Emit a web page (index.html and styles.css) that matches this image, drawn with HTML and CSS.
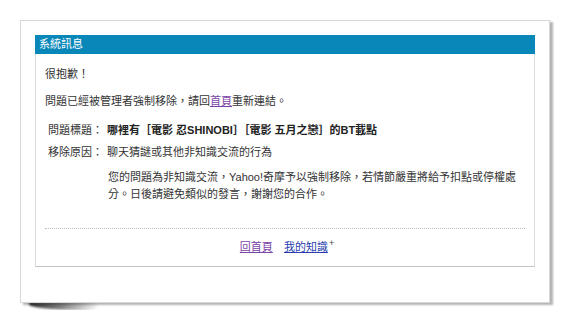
FILE: index.html
```html
<!DOCTYPE html>
<html>
<head>
    <meta charset="utf-8">
    <link rel="stylesheet" href="styles.css">
</head>
<body>

    <div class="page">
        <div class="card">

            <!-- 系統訊息 -->
            <div class="panel">
                <div class="panel-title">系統訊息</div>
                <div class="panel-body">
                    <p class="line">很抱歉！</p>
                    <p class="line notice">問題已經被管理者強制移除，請回<a href="#" class="visited">首頁</a>重新連結。</p>
                    <div class="info">
                        <span class="label">問題標題：</span>
                        <span class="value title">哪裡有［電影 忍SHINOBI］［電影 五月之戀］的BT載點</span>
                        <span class="label">移除原因：</span>
                        <span class="value">聊天猜謎或其他非知識交流的行為</span>
                    </div>
                    <p class="explain">您的問題為非知識交流，Yahoo!奇摩予以強制移除，若情節嚴重將給予扣點或停權處分。日後請避免類似的發言，謝謝您的合作。</p>
                </div>
                <div class="panel-foot">
                    <a href="#" class="visited">回首頁</a>
                    <a href="#" class="mine">我的知識</a><sup class="plus">+</sup>
                </div>
            </div>

        </div>
        <div class="curl"></div>
    </div>

</body>
</html>
```

FILE: styles.css
```css
body {
    margin: 0;
    background: #fff;
    font-family: "Liberation Sans", "Noto Sans CJK TC", sans-serif;
    font-size: 11px;
    color: #333;
}

.page {
    padding: 20px 0 0 20px;
}

.card {
    position: relative;
    z-index: 1;
    width: 500px;
    padding: 14px 14px 35px 14px;
    border: 1px solid #d8d8d8;
    background: #fff;
    box-shadow: 3px 2px 2px rgba(0, 0, 0, 0.3);
}

/* curled shadow under the bottom left corner */
.curl {
    width: 70px;
    height: 8px;
    margin: -1px 0 0 9px;
    border-radius: 0 0 30% 80%;
    background: linear-gradient(to right, rgba(0,0,0,0.8), rgba(0,0,0,0.5) 45%, rgba(0,0,0,0));
    filter: blur(1.2px);
}

.panel {
    border: 1px solid #dcdcdc;
    border-top: 0;
    border-bottom-color: #c4c4c4;
}

.panel-title {
    background: #0a87b9;
    color: #fff;
    height: 19px;
    line-height: 19px;
    padding-left: 4px;
    margin: 0 -1px;
    font-size: 11px;
}

.panel-body {
    padding: 12px 9px 25px 9px;
}

.line {
    margin: 0;
    line-height: 17px;
}

.notice {
    margin-top: 10px;
}

.info {
    display: grid;
    grid-template-columns: 59px auto;
    row-gap: 5px;
    margin: 12px 0 0 3px;
    line-height: 17px;
}

.title {
    font-weight: bold;
    color: #222;
}

.explain {
    width: 414px;
    margin: 8px 0 0 63px;
    line-height: 17px;
}

.panel-foot {
    margin: 0 9px;
    border-top: 1px dotted #bcbcbc;
    padding: 10px 0;
    line-height: 17px;
    text-align: center;
}

.panel-foot a {
    margin: 0 4px;
}

a {
    color: #2b3db0;
    text-decoration: underline;
}

a.visited {
    color: #7b45a8;
}

.plus {
    font-size: 9px;
    color: #444;
    margin-left: -3px;
    vertical-align: 5px;
    line-height: 0;
}
```
